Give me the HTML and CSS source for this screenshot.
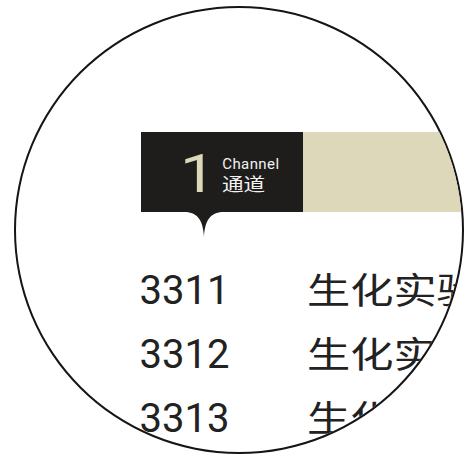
FILE: index.html
```html
<!DOCTYPE html>
<html>
<head>
<meta charset="utf-8">
<link rel="stylesheet" href="styles.css">
</head>
<body>
<div class="watch">
  <div class="header">
    <div class="channel">
      <span class="num">1</span>
      <div class="labels">
        <span class="en">Channel</span>
        <span class="zh">通道</span>
      </div>
      <svg class="pointer" width="40" height="26" viewBox="0 0 40 26">
        <path d="M0 0 H40 C28 0 21 6 20 25 C19 6 12 0 0 0 Z" fill="#1f1d1c"/>
      </svg>
    </div>
    <div class="accent"></div>
  </div>
  <div class="list">
    <div class="row"><span class="code">3311</span><span class="name">生化实验室</span></div>
    <div class="row"><span class="code">3312</span><span class="name">生化实验室</span></div>
    <div class="row"><span class="code">3313</span><span class="name">生化实验室</span></div>
  </div>
</div>
</body>
</html>
```
FILE: styles.css
```css
html, body {
  margin: 0;
  padding: 0;
  background: #ffffff;
}
body {
  width: 466px;
  height: 457px;
  overflow: hidden;
  font-family: Roboto, "Noto Sans CJK SC", sans-serif;
}
.watch {
  box-sizing: border-box;
  width: 450px;
  height: 448px;
  margin: 6px 0 0 14px;
  border: 2.5px solid #151515;
  border-radius: 50%;
  overflow: hidden;
  padding: 123.5px 0 0 124.5px;
  background: #ffffff;
}
.header {
  display: flex;
  height: 80px;
}
.channel {
  position: relative;
  width: 162px;
  flex: none;
  background: #1f1d1c;
  display: flex;
  align-items: center;
  padding-left: 39px;
  box-sizing: border-box;
}
.accent {
  flex: 1;
  background: #dcd8b9;
}
.num {
  font-family: Roboto, sans-serif;
  font-size: 53px;
  line-height: 1;
  color: #dcd8b9;
  display: inline-block;
  transform: scaleX(1.2);
  transform-origin: left center;
  margin-top: 6px;
}
.labels {
  display: flex;
  flex-direction: column;
  margin-left: 13px;
  margin-top: 4px;
}
.en {
  font-family: Roboto, sans-serif;
  font-size: 15px;
  line-height: 18px;
  letter-spacing: 0.4px;
  color: #f2f2f2;
}
.zh {
  font-family: "Noto Sans CJK SC", sans-serif;
  font-size: 18px;
  line-height: 20px;
  color: #f2f2f2;
  display: inline-block;
  transform: scaleX(1.2);
  transform-origin: left center;
}
.pointer {
  position: absolute;
  top: 100%;
  left: 43px;
  display: block;
}
.list {
  margin-top: 44px;
  margin-left: -1px;
}
.row {
  display: grid;
  grid-template-columns: 167px auto;
  align-items: baseline;
  height: 64px;
  line-height: 64px;
  white-space: nowrap;
}
.code {
  font-family: Roboto, sans-serif;
  font-size: 40px;
  color: #222222;
}
.name {
  font-family: "Noto Sans CJK SC", sans-serif;
  font-size: 36px;
  color: #222222;
  display: inline-block;
  transform: scaleX(1.2);
  transform-origin: left center;
}
```
